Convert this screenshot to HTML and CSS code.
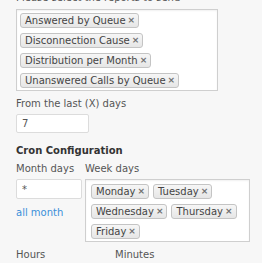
FILE: index.html
```html
<!DOCTYPE html>
<html lang="en">
<head>
  <meta charset="UTF-8">
  <meta name="viewport" content="width=device-width, initial-scale=1.0">
  <title>Report schedule</title>
  <link rel="stylesheet" href="styles.css">
</head>
<body>
  <form class="schedule">
    <label class="field-label intro">Please select the reports to send</label>
    <ul class="choices reports">
      <li class="choice">Answered by Queue<span class="remove">×</span></li>
      <li class="choice">Disconnection Cause<span class="remove">×</span></li>
      <li class="choice">Distribution per Month<span class="remove">×</span></li>
      <li class="choice">Unanswered Calls by Queue<span class="remove">×</span></li>
    </ul>

    <label class="field-label days-label">From the last (X) days</label>
    <input class="text-input days" type="text" value="7">

    <h3 class="section-title">Cron Configuration</h3>

    <div class="cron-grid">
      <label class="field-label">Month days</label>
      <label class="field-label">Week days</label>
      <div class="month-col">
        <input class="text-input month" type="text" value="*">
        <a class="all-link" href="#">all month</a>
      </div>
      <ul class="choices weekdays">
        <li class="choice">Monday<span class="remove">×</span></li>
        <li class="choice">Tuesday<span class="remove">×</span></li>
        <li class="choice">Wednesday<span class="remove">×</span></li>
        <li class="choice">Thursday<span class="remove">×</span></li>
        <li class="choice">Friday<span class="remove">×</span></li>
      </ul>
    </div>

    <div class="time-grid">
      <label class="field-label">Hours</label>
      <label class="field-label">Minutes</label>
      <input class="text-input" type="text">
      <input class="text-input" type="text">
    </div>
  </form>
</body>
</html>
```

FILE: styles.css
```css
body {
  margin: 0;
  padding: 0 12px 0 16px;
  background: #f7f7f7;
  font-family: 'DejaVu Sans', Verdana, sans-serif;
  font-size: 10px;
  color: #555;
}
.field-label {
  display: block;
  line-height: 12px;
}
.intro {
  margin-top: -8px;
}
.choices {
  list-style: none;
  margin: 0;
  padding: 0 3px;
  display: flex;
  flex-wrap: wrap;
  align-content: flex-start;
  background: #fff;
  border: 1px solid #cfcfcf;
  box-shadow: inset 0 1px 2px rgba(0,0,0,0.06);
}
.reports {
  width: 194px;
  margin-top: 5px;
}
.choice {
  display: flex;
  align-items: center;
  height: 13px;
  margin: 3px 4px 2px 0;
  padding: 0 3px 0 4px;
  line-height: 13px;
  color: #444;
  border: 1px solid #c4c4c4;
  border-radius: 3px;
  background: linear-gradient(#f6f6f6, #e6e6e6);
  white-space: nowrap;
}
.remove {
  margin-left: 2px;
  font-size: 9px;
  line-height: 13px;
  font-weight: bold;
  color: #707070;
}
.days-label {
  margin-top: 7px;
}
.text-input {
  display: block;
  box-sizing: border-box;
  margin: 0;
  padding: 0 5px;
  height: 20px;
  font: inherit;
  color: #555;
  background: #fff;
  border: 1px solid #dcdcdc;
  border-radius: 2px;
}
.days {
  width: 73px;
  margin-top: 4px;
  height: 19px;
}
.section-title {
  margin: 12px 0 0;
  font-size: 10px;
  line-height: 12px;
  color: #333;
}
.cron-grid {
  display: grid;
  grid-template-columns: 66px 165px;
  column-gap: 3px;
  row-gap: 4px;
  margin-top: 6px;
}
.month {
  width: 66px;
}
.all-link {
  display: block;
  margin-top: 8px;
  color: #3a8fd9;
  text-decoration: none;
}
.weekdays {
  padding: 1px 0 0 5px;
}
.time-grid {
  display: grid;
  grid-template-columns: 96px 96px;
  column-gap: 3px;
  row-gap: 3px;
  margin-top: 7px;
}
```
